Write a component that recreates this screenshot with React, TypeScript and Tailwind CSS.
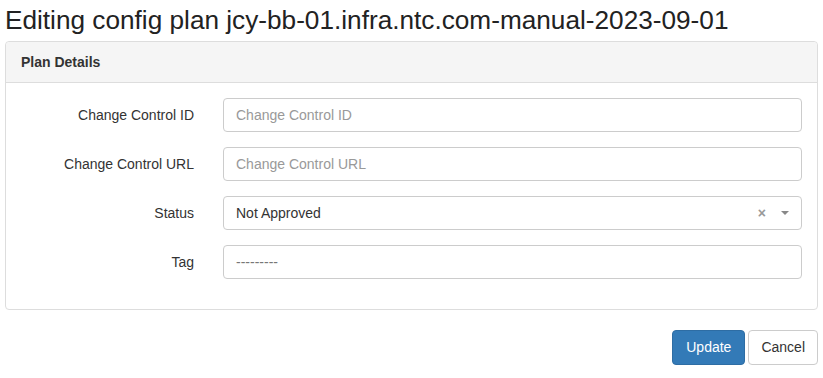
const FIELDS = [
  { label: "Change Control ID", placeholder: "Change Control ID" },
  { label: "Change Control URL", placeholder: "Change Control URL" },
];

function Row({ label, children }: { label: string; children: React.ReactNode }) {
  return (
    <div className="flex items-center">
      <label className="w-[202px] shrink-0 pr-[29px] text-right text-[14px] text-[#333]">{label}</label>
      <div className="flex-1">{children}</div>
    </div>
  );
}

export default function App() {
  return (
    <div className="min-h-[378px] bg-white px-[5px] font-['Liberation_Sans',Arial,sans-serif] text-[#333]">
      <h1 className="pt-[4px] text-[26.2px] leading-[32px] text-[#222]">
        Editing config plan jcy-bb-01.infra.ntc.com-manual-2023-09-01
      </h1>

      <div className="mt-[5px] rounded-[4px] border border-[#ddd] bg-white">
        <div className="h-[41px] rounded-t-[4px] border-b border-[#ddd] bg-[#f5f5f5] px-[15px] text-[14px] font-bold leading-[40px]">
          Plan Details
        </div>
        <div className="flex flex-col gap-[15px] px-[15px] pt-[15px] pb-[30px]">
          {FIELDS.map((f) => (
            <Row key={f.label} label={f.label}>
              <input
                placeholder={f.placeholder}
                className="h-[34px] w-full rounded-[4px] border border-[#ccc] px-[12px] text-[14px] text-[#555] placeholder:text-[#999] outline-none"
              />
            </Row>
          ))}

          <Row label="Status">
            <div className="flex h-[34px] w-full items-center rounded-[4px] border border-[#ccc] pl-[12px] pr-[12px] text-[14px] text-[#333]">
              <span className="flex-1">Not Approved</span>
              <span className="mr-[15px] text-[14px] font-bold leading-none text-[#999]">×</span>
              <svg width="8" height="4" viewBox="0 0 8 4">
                <path d="M0 0 L8 0 L4 4 Z" fill="#888" />
              </svg>
            </div>
          </Row>

          <Row label="Tag">
            <div className="flex h-[34px] w-full items-center rounded-[4px] border border-[#ccc] px-[12px] text-[14px] text-[#777]">
              ---------
            </div>
          </Row>
        </div>
      </div>

      <div className="mt-[20px] flex justify-end gap-[3px]">
        <button className="h-[35px] rounded-[4px] border border-[#2e6da4] bg-[#337ab7] px-[13px] text-[14px] text-white">
          Update
        </button>
        <button className="h-[35px] rounded-[4px] border border-[#ccc] bg-white px-[12px] text-[14px] text-[#333]">
          Cancel
        </button>
      </div>
    </div>
  );
}
